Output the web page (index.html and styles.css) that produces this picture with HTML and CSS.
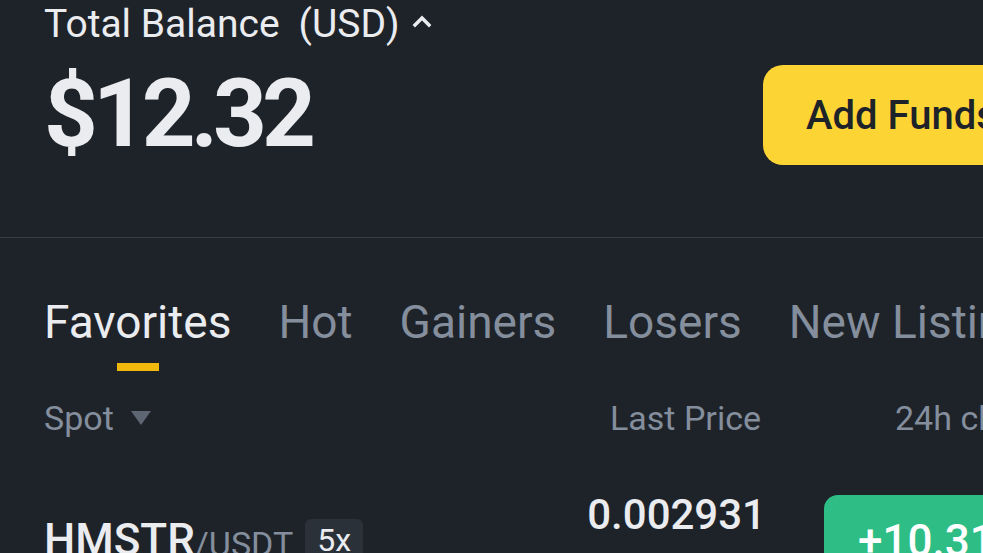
FILE: index.html
```html
<!DOCTYPE html>
<html lang="en">
<head>
<meta charset="UTF-8">
<meta name="viewport" content="width=device-width, initial-scale=1.0">
<title>Wallet - Overview</title>
<link rel="stylesheet" href="styles.css">
</head>
<body>
<main class="screen">
  <section class="balance">
    <div class="balance-info">
      <div class="balance-label">
        <span>Total Balance</span>
        <span class="currency">(USD)</span>
        <svg class="chevron" width="20" height="14" viewBox="0 0 20 14">
          <path d="M3 11 L10 4 L17 11" fill="none" stroke="#eaecef" stroke-width="3.4" stroke-linecap="square"/>
        </svg>
      </div>
      <div class="balance-amount">$12.32</div>
    </div>
    <button class="add-funds">Add Funds</button>
  </section>

  <nav class="tabs">
    <a class="tab active">Favorites</a>
    <a class="tab">Hot</a>
    <a class="tab">Gainers</a>
    <a class="tab">Losers</a>
    <a class="tab">New Listing</a>
  </nav>

  <div class="list-head">
    <div class="market">
      Spot
      <svg width="20" height="14" viewBox="0 0 20 14"><path d="M0 0 H20 L10 14 Z" fill="#5e6673"/></svg>
    </div>
    <div class="col-price">Last Price</div>
    <div class="col-change">24h chg%</div>
  </div>

  <div class="pair-row">
    <div class="pair">
      <span class="base">HMSTR</span><span class="quote">/USDT</span>
      <span class="lev">5x</span>
    </div>
    <div class="price">0.002931</div>
    <div class="change up">+10.31%</div>
  </div>
</main>
</body>
</html>
```

FILE: styles.css
```css
html, body {
  margin: 0;
  height: 100%;
  background: #1e2329;
  overflow: hidden;
}
body {
  font-family: "Roboto", "Noto Sans", sans-serif;
  color: #eaecef;
}
.screen {
  width: 1100px;
}
.balance {
  display: flex;
  align-items: flex-start;
  height: 238px;
  padding-left: 44px;
  border-bottom: 1px solid #363c46;
  box-sizing: border-box;
}
.balance-info {
  width: 719px;
  flex: none;
}
.balance-label {
  display: flex;
  align-items: center;
  font-size: 39px;
  line-height: 46px;
  margin-top: 1px;
}
.currency {
  margin-left: 19px;
}
.chevron {
  margin-left: 12px;
  margin-top: -6px;
}
.balance-amount {
  font-weight: 700;
  font-size: 94px;
  line-height: 110px;
  letter-spacing: -5px;
  margin-top: 12px;
}
.add-funds {
  flex: none;
  margin-top: 65px;
  width: 320px;
  height: 100px;
  border: none;
  border-radius: 20px;
  background: #fcd535;
  color: #1e2329;
  font-family: "Roboto", sans-serif;
  font-size: 40px;
  font-weight: 500;
  text-align: left;
  padding-left: 43px;
}
.tabs {
  display: flex;
  gap: 47px;
  padding-left: 44px;
  margin-top: 50px;
}
.tab {
  position: relative;
  font-size: 46px;
  line-height: 68px;
  color: #848e9c;
  white-space: nowrap;
}
.tab.active {
  color: #eaecef;
}
.tab.active::after {
  content: "";
  position: absolute;
  left: 50%;
  bottom: -15px;
  width: 42px;
  height: 8px;
  margin-left: -21px;
  background: #f0b90b;
}
.list-head {
  display: flex;
  align-items: center;
  padding-left: 44px;
  margin-top: 42px;
  font-size: 34px;
  color: #848e9c;
  white-space: nowrap;
}
.market {
  display: flex;
  align-items: center;
  gap: 17px;
  width: 566px;
  flex: none;
}
.col-price {
  width: 150px;
  flex: none;
  text-align: right;
}
.col-change {
  margin-left: 135px;
  flex: none;
}
.pair-row {
  display: flex;
  align-items: flex-start;
  padding-left: 44px;
  margin-top: 52px;
  white-space: nowrap;
}
.pair {
  display: flex;
  align-items: center;
  width: 542px;
  flex: none;
  margin-top: 24px;
}
.base {
  font-size: 44px;
  font-weight: 500;
}
.quote {
  font-size: 34px;
  color: #848e9c;
  margin-top: 8px;
}
.lev {
  margin-left: 12px;
  padding: 2px 12px;
  background: #2b3139;
  border-radius: 6px;
  font-size: 32px;
}
.price {
  width: 180px;
  flex: none;
  text-align: right;
  font-weight: 500;
  font-size: 42px;
}
.change {
  flex: none;
  margin-left: 58px;
  margin-top: 5px;
  padding: 20px 34px;
  border-radius: 14px;
  font-size: 44px;
  font-weight: 500;
  color: #fff;
}
.change.up {
  background: #2ebd85;
}
```
